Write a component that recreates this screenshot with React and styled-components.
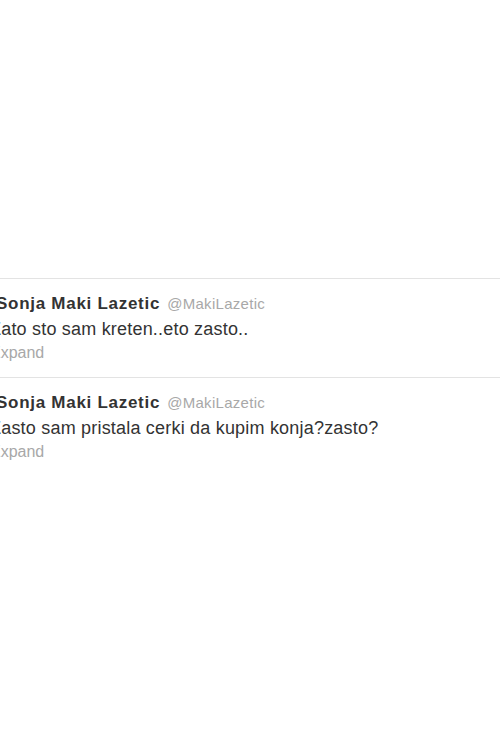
import React from "react";
import styled, { createGlobalStyle } from "styled-components";

const GlobalStyle = createGlobalStyle`
  html, body {
    margin: 0;
    padding: 0;
    background: #ffffff;
  }
  body {
    font-family: "Liberation Sans", Arial, sans-serif;
    overflow: hidden;
  }
`;

const Page = styled.div`
  width: 500px;
  height: 750px;
  padding-top: 278px;
  box-sizing: border-box;
  overflow: hidden;
`;

const Stream = styled.ol`
  list-style: none;
  margin: 0;
  padding: 0;
`;

const Tweet = styled.li`
  height: 99px;
  box-sizing: border-box;
  border-top: 1px solid #e3e3e3;
  padding: 15px 0 0 0;
  margin-left: -10px;
`;

const Header = styled.div`
  display: flex;
  align-items: baseline;
  gap: 7px;
  line-height: 20px;
`;

const Name = styled.strong`
  font-size: 17px;
  font-weight: bold;
  color: #333333;
  letter-spacing: 0.72px;
  margin-left: 6px;
`;

const Handle = styled.span`
  font-size: 15px;
  color: #a8a8a8;
  letter-spacing: 0.3px;
`;

const Text = styled.p`
  margin: 3px 0 0;
  font-size: 18px;
  line-height: 24px;
  color: #333333;
  letter-spacing: 0.2px;
`;

const Expand = styled.span`
  display: block;
  margin-top: 1px;
  font-size: 16px;
  line-height: 22px;
  color: #a8a8a8;
`;

const tweets = [
  { id: 1, text: "Zato sto sam kreten..eto zasto.." },
  { id: 2, text: "Zasto sam pristala cerki da kupim konja?zasto?" },
];

function App() {
  return (
    <>
      <GlobalStyle />
      <Page>
        <Stream>
          {tweets.map((t) => (
            <Tweet key={t.id}>
              <Header>
                <Name>Sonja Maki Lazetic</Name>
                <Handle>@MakiLazetic</Handle>
              </Header>
              <Text>{t.text}</Text>
              <Expand>Expand</Expand>
            </Tweet>
          ))}
        </Stream>
      </Page>
    </>
  );
}

export default App;
